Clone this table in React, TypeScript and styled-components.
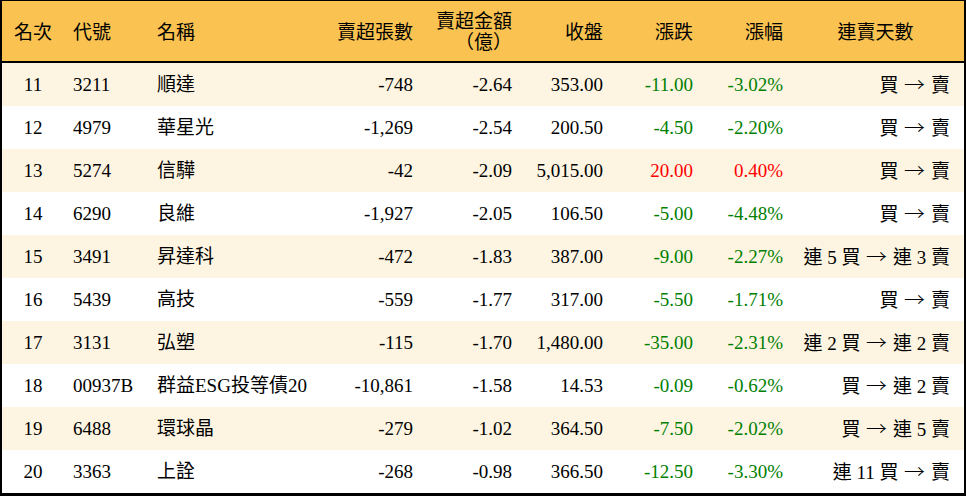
import React from "react";
import styled, { createGlobalStyle } from "styled-components";

const Global = createGlobalStyle`
  html, body { margin: 0; padding: 0; background: #ffffff; }
  body { font-family: "Liberation Serif", "Noto Sans CJK TC", serif; }
`;

const COLS = "62px 84px 182px 92px 99px 91px 90px 90px 172px";

const Table = styled.div`
  width: 966px;
  box-sizing: border-box;
  border-style: solid;
  border-color: #000;
  border-width: 1px 2px 3px 2px;
  font-family: "Liberation Serif", "Noto Sans CJK TC", serif;
  font-size: 19px;
  color: #000;
`;

const HeaderRow = styled.div`
  display: grid;
  grid-template-columns: ${COLS};
  height: 60px;
  background: #f9c251;
  border-bottom: 2px solid #000;
`;

const Row = styled.div<{ $alt: boolean }>`
  display: grid;
  grid-template-columns: ${COLS};
  height: 43px;
  background: ${(p) => (p.$alt ? "#fdf5e2" : "#ffffff")};
`;

type Align = "left" | "right" | "center";

const Cell = styled.div<{ $align: Align; $pr?: number; $tone?: "up" | "down" }>`
  display: flex;
  align-items: center;
  justify-content: ${(p) =>
    p.$align === "left" ? "flex-start" : p.$align === "right" ? "flex-end" : "center"};
  text-align: ${(p) => p.$align};
  padding: 0 ${(p) => p.$pr ?? 9}px 0 9px;
  white-space: nowrap;
  line-height: 21px;
  color: ${(p) => (p.$tone === "up" ? "#ff0000" : p.$tone === "down" ? "#008000" : "#000")};
`;

const HeadCell = styled(Cell)`
  padding-top: 2px;
`;

const Stack = styled.span`
  display: block;
  line-height: 21px;
`;

const Arrow = styled.span`
  font-family: "Noto Sans CJK TC", "DejaVu Sans", sans-serif;
  font-weight: 300;
  display: inline-block;
  margin: 0 2px;
  transform: scaleX(1.1);
`;

type Item = {
  rank: number;
  code: string;
  name: string;
  vol: string;
  amt: string;
  close: string;
  chg: string;
  pct: string;
  streak: string;
};

const data: Item[] = [
  { rank: 11, code: "3211", name: "順達", vol: "-748", amt: "-2.64", close: "353.00", chg: "-11.00", pct: "-3.02%", streak: "買 → 賣" },
  { rank: 12, code: "4979", name: "華星光", vol: "-1,269", amt: "-2.54", close: "200.50", chg: "-4.50", pct: "-2.20%", streak: "買 → 賣" },
  { rank: 13, code: "5274", name: "信驊", vol: "-42", amt: "-2.09", close: "5,015.00", chg: "20.00", pct: "0.40%", streak: "買 → 賣" },
  { rank: 14, code: "6290", name: "良維", vol: "-1,927", amt: "-2.05", close: "106.50", chg: "-5.00", pct: "-4.48%", streak: "買 → 賣" },
  { rank: 15, code: "3491", name: "昇達科", vol: "-472", amt: "-1.83", close: "387.00", chg: "-9.00", pct: "-2.27%", streak: "連 5 買 → 連 3 賣" },
  { rank: 16, code: "5439", name: "高技", vol: "-559", amt: "-1.77", close: "317.00", chg: "-5.50", pct: "-1.71%", streak: "買 → 賣" },
  { rank: 17, code: "3131", name: "弘塑", vol: "-115", amt: "-1.70", close: "1,480.00", chg: "-35.00", pct: "-2.31%", streak: "連 2 買 → 連 2 賣" },
  { rank: 18, code: "00937B", name: "群益ESG投等債20", vol: "-10,861", amt: "-1.58", close: "14.53", chg: "-0.09", pct: "-0.62%", streak: "買 → 連 2 賣" },
  { rank: 19, code: "6488", name: "環球晶", vol: "-279", amt: "-1.02", close: "364.50", chg: "-7.50", pct: "-2.02%", streak: "買 → 連 5 賣" },
  { rank: 20, code: "3363", name: "上詮", vol: "-268", amt: "-0.98", close: "366.50", chg: "-12.50", pct: "-3.30%", streak: "連 11 買 → 賣" },
];

function Streak({ text }: { text: string }) {
  const [a, b] = text.split("→");
  return (
    <span>
      {a}
      <Arrow>→</Arrow>
      {b}
    </span>
  );
}

export default function App() {
  return (
    <>
      <Global />
      <Table>
        <HeaderRow>
          <HeadCell $align="center">名次</HeadCell>
          <HeadCell $align="left">代號</HeadCell>
          <HeadCell $align="left">名稱</HeadCell>
          <HeadCell $align="right">賣超張數</HeadCell>
          <HeadCell $align="right">
            <Stack>
              賣超金額
              <br />
              （億）
            </Stack>
          </HeadCell>
          <HeadCell $align="right">收盤</HeadCell>
          <HeadCell $align="right">漲跌</HeadCell>
          <HeadCell $align="right">漲幅</HeadCell>
          <HeadCell $align="center" $pr={14}>連賣天數</HeadCell>
        </HeaderRow>
        {data.map((d, i) => {
          const tone = d.chg.startsWith("-") ? "down" : "up";
          return (
            <Row key={d.rank} $alt={i % 2 === 0}>
              <Cell $align="center">{d.rank}</Cell>
              <Cell $align="left">{d.code}</Cell>
              <Cell $align="left">{d.name}</Cell>
              <Cell $align="right">{d.vol}</Cell>
              <Cell $align="right">{d.amt}</Cell>
              <Cell $align="right">{d.close}</Cell>
              <Cell $align="right" $tone={tone}>{d.chg}</Cell>
              <Cell $align="right" $tone={tone}>{d.pct}</Cell>
              <Cell $align="right" $pr={14}>
                <Streak text={d.streak} />
              </Cell>
            </Row>
          );
        })}
      </Table>
    </>
  );
}
